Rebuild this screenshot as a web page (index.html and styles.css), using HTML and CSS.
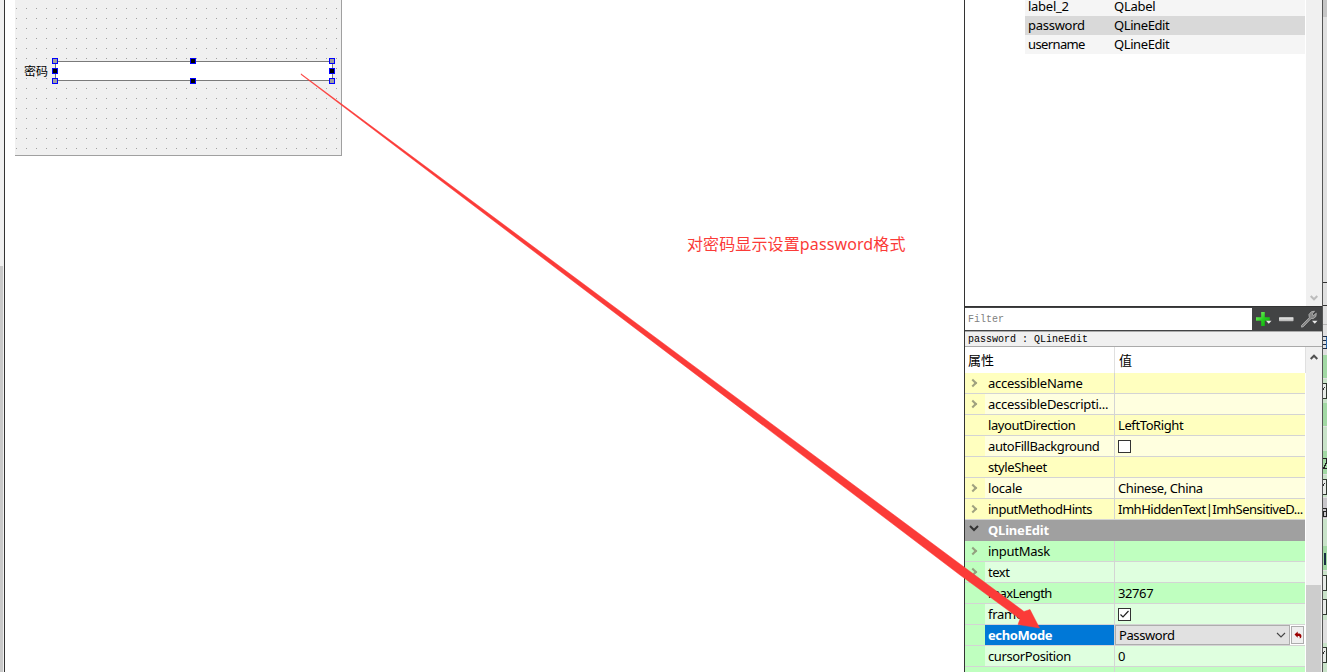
FILE: index.html
```html
<!DOCTYPE html>
<html lang="zh-CN">
<head>
<meta charset="utf-8">
<title>Qt Designer</title>
<link rel="stylesheet" href="styles.css">
</head>
<body>
<div class="app">
  <div class="left-edge"><div class="edge-thumb"></div></div>
  <main class="canvas">
    <div class="form">
      <svg class="grid" width="326" height="155" shape-rendering="crispEdges">
        <defs><pattern id="dots" x="0" y="8" width="10" height="10" patternUnits="userSpaceOnUse"><rect width="1" height="1" fill="#a0a0a0"/></pattern></defs>
        <rect width="326" height="155" fill="url(#dots)"/>
      </svg>
      <div class="field-row">
        <span class="field-label">密码</span>
        <div class="line-edit">
          <i class="handle corner tl"></i><i class="handle tc"></i><i class="handle corner tr"></i>
          <i class="handle ml"></i><i class="handle mr"></i>
          <i class="handle corner bl"></i><i class="handle bc"></i><i class="handle corner br"></i>
        </div>
      </div>
    </div>
    <p class="note">对密码显示设置password格式</p>
  </main>
  <aside class="dock">
    <section class="inspector">
      <div class="objects">
        <div class="object first"><span class="t3">label_2</span><span class="t3">QLabel</span></div>
        <div class="object selected"><span class="t3">password</span><span class="t4">QLineEdit</span></div>
        <div class="object"><span class="t6">username</span><span class="t4">QLineEdit</span></div>
      </div>
      <div class="track">
        <svg class="down" width="8" height="6" viewBox="0 0 8 6"><path d="M.7 1 4 4.3 7.3 1" fill="none" stroke="#bcbcbc" stroke-width="2"/></svg>
      </div>
    </section>
    <div class="filter-bar">
      <div class="filter">Filter</div>
      <div class="tools">
        <svg width="69" height="23" viewBox="0 0 69 23">
          <defs>
            <linearGradient id="plus" x2="1" y2="1"><stop stop-color="#8cff70"/><stop offset=".5" stop-color="#28cf20"/><stop offset="1" stop-color="#05a705"/></linearGradient>
            <linearGradient id="minus" x2="0" y2="1"><stop stop-color="#efefef"/><stop offset="1" stop-color="#b4b4b4"/></linearGradient>
          </defs>
          <path d="M9.200 4h3.600v5.200h5v3.600h-5V18H9.200v-5.200H4V9.200h5.200z" fill="url(#plus)"/>
          <path d="M14 12.800h5.500l-2.750 3z" fill="#e8e8e8"/>
          <rect x="27" y="9.200" width="14.500" height="4" rx=".6" fill="url(#minus)"/>
          <path d="M49.500 17.500 57.300 9.600 56.900 6.500 59.300 3.800 62.500 3.200 60.200 5.800 61.300 7.700 64.300 5.200 63.900 8.500 61.300 10.600 59.200 10.500 51.300 18.700 49.600 19.200z" fill="#858585" stroke="#c4c4c4" stroke-width=".7"/>
          <path d="M60 12.800h5.500l-2.750 3z" fill="#e8e8e8"/>
        </svg>
      </div>
    </div>
    <div class="object-title">password : QLineEdit</div>
    <section class="properties">
      <div class="table">
        <div class="head"><span>属性</span><span>值</span></div>
        <div class="row y1"><i class="gut"><b class="arrow"></b></i><span class="name"><em class="t3">accessibleName</em></span><span class="val"></span></div>
        <div class="row y2"><i class="gut"><b class="arrow"></b></i><span class="name"><em class="t3">accessibleDescripti...</em></span><span class="val"></span></div>
        <div class="row y1"><i class="gut"></i><span class="name"><em class="t4">layoutDirection</em></span><span class="val"><em class="t4">LeftToRight</em></span></div>
        <div class="row y2"><i class="gut"></i><span class="name"><em class="t4">autoFillBackground</em></span><span class="val"><i class="check"></i></span></div>
        <div class="row y1"><i class="gut"></i><span class="name"><em class="t4">styleSheet</em></span><span class="val"></span></div>
        <div class="row y2"><i class="gut"><b class="arrow"></b></i><span class="name"><em class="t2">locale</em></span><span class="val"><em class="t4">Chinese, China</em></span></div>
        <div class="row y1"><i class="gut"><b class="arrow"></b></i><span class="name"><em class="t5">inputMethodHints</em></span><span class="val"><em class="t5">ImhHiddenText|ImhSensitiveD...</em></span></div>
        <div class="row group"><svg width="20" height="20"><path d="m5 6 4 4 4-4" fill="none" stroke="#333" stroke-width="2"/></svg><em class="t2">QLineEdit</em></div>
        <div class="row g1"><i class="gut"><b class="arrow"></b></i><span class="name"><em class="t3">inputMask</em></span><span class="val"></span></div>
        <div class="row g2"><i class="gut"><b class="arrow"></b></i><span class="name"><em class="t5">text</em></span><span class="val"></span></div>
        <div class="row g1"><i class="gut"></i><span class="name"><em class="t6">maxLength</em></span><span class="val"><em class="t4">32767</em></span></div>
        <div class="row g2"><i class="gut"></i><span class="name"><em class="t3">frame</em></span><span class="val"><i class="check"><svg width="11" height="11"><path d="m1.500 5.500 2.500 2.500 5.500-6" fill="none" stroke="#222" stroke-width="1.200"/></svg></i></span></div>
        <div class="row g1 active"><i class="gut"></i><span class="name"><em class="t4">echoMode</em></span><span class="editor"><span class="combo"><em class="t4">Password</em><svg width="10" height="7"><path d="m1 1 4 4 4-4" fill="none" stroke="#444" stroke-width="1.100"/></svg></span><span class="reset"><svg width="8" height="8"><path d="M.5 3.500 3.700.500V2.500h1.800Q7.500 3 7.500 5T5.700 7.500q.7-2-.7-2.500H3.700v1.700z" fill="#9b0000"/></svg></span></span></div>
        <div class="row g2"><i class="gut"></i><span class="name"><em class="t4">cursorPosition</em></span><span class="val"><em>0</em></span></div>
        <div class="row g1"><i class="gut"></i><span class="name"></span><span class="val"></span></div>
      </div>
      <div class="track prop-track">
        <svg class="up" width="8" height="7"><path d="M.7 5 4 1.700 7.300 5" fill="none" stroke="#505050" stroke-width="2"/></svg>
        <div class="thumb"></div>
      </div>
    </section>
  </aside>
  <div class="right-edge">
    <svg width="4" height="672" shape-rendering="crispEdges">
      <rect width="4" height="672" fill="#e0e0e0"/>
      <rect width="4" height="17" fill="#c6c6c6"/>
      <path d="M0 282.500h4M0 305.500h4" stroke="#333"/>
      <path d="M0 324.500h4" stroke="#b5b5b5"/>
      <path d="M0 336.500h4M0 340.500h4M0 344.500h4M0 348.500h4" stroke="#1c2a44"/>
      <path d="M3 337h1v11H3z" fill="#2869b0"/>
      <path d="M0 355h4v23H0zM0 403h4v23H0zM0 451h4v23H0zM0 546h4v24H0z" fill="#a2d9a4"/>
      <path d="M0 379h4v24H0zM0 427h4v24H0zM0 475h4v22H0zM0 519h4v27H0zM0 571h4v49H0zM0 643h4v29H0z" fill="#c9e3c9"/>
      <path d="M0 498h4v20H0z" fill="#c8c6ca"/>
      <path d="M0 383.500h3.500v15H0M0 479.500h3.500v15H0M0 575.500h3.500v15H0M0 599.500h3.500v15H0M0 647.500h3.500v15H0" fill="#e8ece8" stroke="#303830"/>
      <path d="M0 390v-2h1v-1h1v1H1v2zM0 486v-2h1v-1h1v1H1v2zM0 654v-2h1v-1h1v1H1v2z" fill="#333"/>
      <path d="M0 458.500h3.500v4L.5 468.500H4M0 508.500h3.500V516M4 511.500H.5v4.500H4" fill="none" stroke="#222"/>
      <path d="M1 553h2v12H1z" fill="#173042"/>
    </svg>
  </div>
  <svg class="pointer" width="1327" height="672"><path d="M301 73.800 960 564 1024 611.500 1030 609.500 1039.500 628 1018 624.500 1020 619 960 575 301 74.500z" fill="#fb3b38" stroke="#fb3b38" stroke-width=".5"/></svg>
</div>
</body>
</html>
```
FILE: styles.css
```css
* { box-sizing: border-box; }
body { margin: 0; overflow: hidden; background: #fff; color: #000; font: 13px/20px "Noto Sans", "Noto Sans CJK SC", sans-serif; }
em, i, b { font-style: normal; font-weight: inherit; }
svg { display: block; }
.app { position: relative; display: flex; width: 1327px; height: 672px; overflow: hidden; }
.left-edge { width: 5px; height: 672px; padding-top: 266px; background: #f0f0f0; border-right: 1px solid #333; }
.edge-thumb { width: 3px; height: 406px; background: #c9c9c9; }
.canvas { width: 959px; padding-left: 10px; }
.form { position: relative; width: 327px; height: 156px; background: #f0f0f0; border: solid #a0a0a0; border-width: 0 1px 1px 0; }
.grid { margin-left: 1px; }
.field-row { position: absolute; left: 9px; top: 61px; display: flex; }
.field-label { width: 31px; font: 12px/19px "Noto Sans CJK SC", sans-serif; }
.line-edit { position: relative; width: 278px; height: 20px; background: #fff; border: 1px solid #7a7a7a; }
.handle { position: absolute; width: 6px; height: 6px; background: #000; border: 1px solid #00f; }
.corner { background: #a0a0a0; }
.tl, .ml, .bl { left: -4px; }
.tc, .bc { left: 134px; }
.tr, .mr, .br { left: 273px; }
.tl, .tc, .tr { top: -4px; }
.ml, .mr { top: 6px; }
.bl, .bc, .br { top: 16px; }
.note { margin: 76px 0 0 672px; color: #fb3b38; font: 16px/24px "Noto Sans", "Noto Sans CJK SC", sans-serif; letter-spacing: .12px; white-space: nowrap; }
.t2 { letter-spacing: -.2px; }
.t3 { letter-spacing: -.27px; }
.t4 { letter-spacing: -.4px; }
.t5 { letter-spacing: -.48px; }
.t6 { letter-spacing: -.62px; }
.dock { width: 358px; border-left: 1px solid #333; }
.inspector { display: flex; height: 307px; border-bottom: 1px solid #333; }
.objects { width: 341px; padding-left: 60px; }
.object { display: flex; height: 19px; width: 280px; padding-left: 3px; background: #f5f5f5; line-height: 19px; }
.object.first { height: 16px; line-height: 13px; }
.object span:first-child { width: 86px; }
.object.selected { background: #d9d9d9; }
.track { width: 16px; background: #f0f0f0; }
.down { margin: 295px 0 0 4px; }
.filter-bar { display: flex; height: 24px; padding: 1px 0; background: #424344; }
.filter { width: 287px; padding-left: 3px; color: #808080; background: #fff; font: 10px/23px "Liberation Mono", monospace; }
.tools { width: 69px; }
.object-title { height: 16px; padding-left: 3px; background: #f0f0f0; border: solid #aaa; border-width: 1px 0; font: 10px/16px "Liberation Mono", monospace; }
.properties { display: flex; height: 325px; }
.table { width: 341px; }
.head { display: flex; height: 26px; line-height: 26px; border-right: 1px solid #e0e0e0; }
.head span:first-child { width: 150px; padding-left: 3px; border-right: 1px solid #e0e0e0; }
.head span + span { padding-left: 4px; }
.row { display: flex; width: 340px; height: 21px; border-bottom: 1px solid #d4d4d4; }
.gut { display: flex; width: 20px; height: 20px; }
.arrow { width: 6px; height: 6px; margin: 7px 0 0 5px; border: solid #888a70; border-width: 2px 2px 0 0; opacity: .8; transform: rotate(45deg); }
.name { width: 130px; padding-left: 3px; border-right: 1px solid #d4d4d4; white-space: nowrap; }
.val { width: 190px; padding-left: 3px; white-space: nowrap; }
.y1, .y2 .gut { background: #ffffbf; }
.y2 { background: #ffffdf; }
.g1, .g2 .gut { background: #bfffbf; }
.g2 { background: #dfffdf; }
.group { background: #a0a0a0; border-color: #a0a0a0; color: #fff; font-weight: 700; }
.group em { padding-left: 3px; }
.check { display: block; width: 13px; height: 13px; margin-top: 4px; border: 1px solid #333; background: #fff; }
.active .name { color: #fff; background: #0078d7; font-weight: 700; }
.editor { display: flex; width: 190px; background: #fff; }
.combo { display: flex; justify-content: space-between; align-items: center; width: 175px; height: 20px; padding: 0 3px; border: 1px solid #adadad; background: #e1e1e1; }
.reset { display: flex; align-items: center; justify-content: center; width: 13px; height: 18px; margin: 1px 0 0 1px; border: 1px solid #adadad; background: #f0f0f0; }
.up { margin: 7px 0 0 4px; }
.prop-track { overflow: hidden; }
.thumb { width: 15px; height: 90px; margin-top: 224px; background: #cdcdcd; }
.right-edge { width: 5px; border-left: 1px solid #555; }
.pointer { position: absolute; left: 0; top: 0; }
```
